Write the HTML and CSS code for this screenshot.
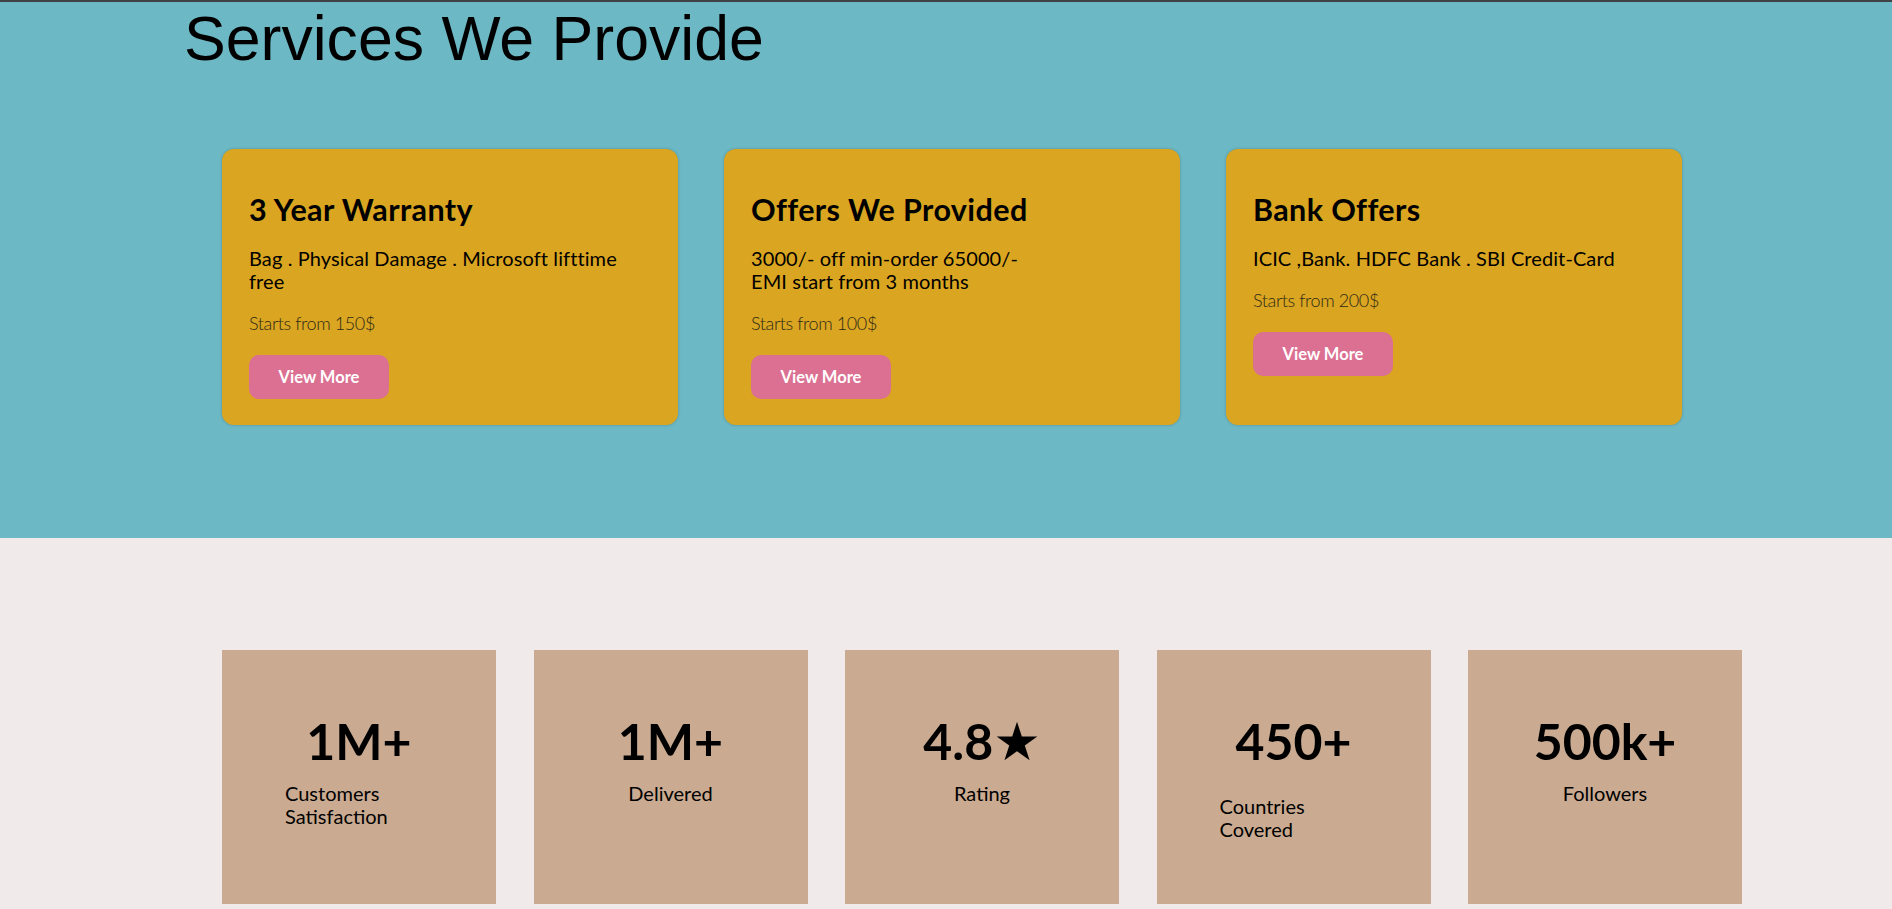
FILE: index.html
```html
<!DOCTYPE html>
<html lang="en">
<head>
<meta charset="utf-8">
<title>Services We Provide</title>
<link rel="stylesheet" href="styles.css">
</head>
<body>
<section class="services">
  <h1 class="services-title">Services We Provide</h1>
  <div class="cards">
    <div class="card">
      <h2 class="card-title">3 Year Warranty</h2>
      <p class="card-text">Bag . Physical Damage . Microsoft lifttime free</p>
      <p class="card-price">Starts from 150$</p>
      <a class="btn" href="#">View More</a>
    </div>
    <div class="card">
      <h2 class="card-title">Offers We Provided</h2>
      <p class="card-text">3000/- off min-order 65000/-<br>EMI start from 3 months</p>
      <p class="card-price">Starts from 100$</p>
      <a class="btn" href="#">View More</a>
    </div>
    <div class="card">
      <h2 class="card-title">Bank Offers</h2>
      <p class="card-text">ICIC ,Bank. HDFC Bank . SBI Credit-Card</p>
      <p class="card-price">Starts from 200$</p>
      <a class="btn" href="#">View More</a>
    </div>
  </div>
</section>
<section class="stats">
  <div class="stat">
    <div class="stat-num">1M+</div>
    <p class="stat-label">Customers Satisfaction</p>
  </div>
  <div class="stat">
    <div class="stat-num">1M+</div>
    <p class="stat-label">Delivered</p>
  </div>
  <div class="stat">
    <div class="stat-num">4.8<span class="star">★</span></div>
    <p class="stat-label">Rating</p>
  </div>
  <div class="stat">
    <div class="stat-num">450+</div>
    <p class="stat-label stat-label-low">Countries Covered</p>
  </div>
  <div class="stat">
    <div class="stat-num">500k+</div>
    <p class="stat-label">Followers</p>
  </div>
</section>
</body>
</html>
```
FILE: styles.css
```css
* {
  box-sizing: border-box;
}

body {
  margin: 0;
  font-family: "Lato", "DejaVu Sans", sans-serif;
  color: #000;
  background: #f0eaea;
}

.services {
  background: #6cb8c5;
  border-top: 2px solid #404245;
  padding: 1px 0 113px;
}

.services-title {
  margin: 0;
  padding-left: 184px;
  font-family: "Liberation Sans", Arial, sans-serif;
  font-weight: normal;
  font-size: 62.6px;
  line-height: 71px;
  color: #000;
}

.cards {
  display: flex;
  gap: 46px;
  margin-top: 75px;
  padding-left: 222px;
}

.card {
  width: 456px;
  flex-shrink: 0;
  background: #daa520;
  border-radius: 12px;
  padding: 43px 27px 26px;
  box-shadow: 0 0 3px rgba(0, 0, 0, 0.22);
}

.card-title {
  margin: 0;
  font-size: 30.5px;
  line-height: 35px;
  font-weight: 700;
  letter-spacing: 0.4px;
}

.card-text {
  margin: 20px 0 0;
  font-size: 20px;
  line-height: 23px;
  letter-spacing: 0.1px;
}

.card-price {
  margin: 19px 0 0;
  font-size: 18px;
  line-height: 23px;
  font-weight: 300;
  letter-spacing: -0.4px;
  color: #2f2a18;
}

.btn {
  display: flex;
  align-items: center;
  justify-content: center;
  width: 140px;
  height: 44px;
  margin-top: 20px;
  border-radius: 10px;
  background: #db7093;
  color: #fff;
  font-weight: 700;
  font-size: 16.5px;
  text-decoration: none;
}

.stats {
  display: flex;
  gap: 37.5px;
  padding: 112px 0 5px 222px;
}

.stat {
  width: 274px;
  height: 254px;
  flex-shrink: 0;
  background: #caab91;
  display: flex;
  flex-direction: column;
  align-items: center;
  padding: 62px 63px 0;
}

.stat-num {
  font-size: 50px;
  line-height: 58px;
  font-weight: 700;
  white-space: nowrap;
}

.star {
  font-family: "DejaVu Sans", sans-serif;
  font-size: 53px;
  line-height: 1;
}

.stat-label {
  margin: 12px 0 0;
  font-size: 20px;
  line-height: 23px;
}

.stat-label-low {
  margin-top: 25px;
}
```
